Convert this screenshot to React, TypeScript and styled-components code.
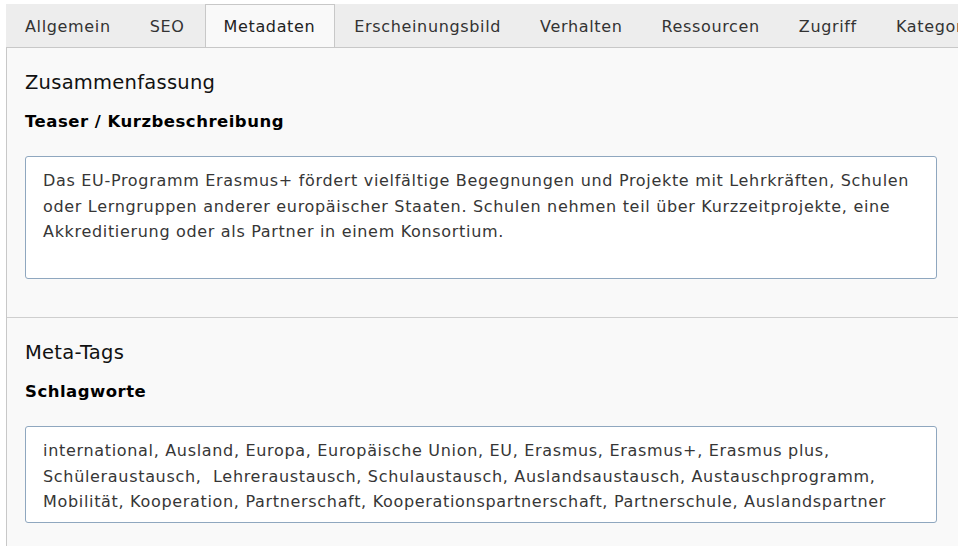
import { createGlobalStyle, styled } from 'styled-components';

const GlobalStyle = createGlobalStyle`
  body {
    margin: 0;
    background: #ffffff;
    font-family: 'DejaVu Sans', Verdana, sans-serif;
    color: #333333;
  }
`;

const tabs = [
  'Allgemein',
  'SEO',
  'Metadaten',
  'Erscheinungsbild',
  'Verhalten',
  'Ressourcen',
  'Zugriff',
  'Kategorien',
];

const teaser = `Das EU-Programm Erasmus+ fördert vielfältige Begegnungen und Projekte mit Lehrkräften, Schulen
oder Lerngruppen anderer europäischer Staaten. Schulen nehmen teil über Kurzzeitprojekte, eine
Akkreditierung oder als Partner in einem Konsortium.`;

const keywords = `international, Ausland, Europa, Europäische Union, EU, Erasmus, Erasmus+, Erasmus plus,
Schüleraustausch,  Lehreraustausch, Schulaustausch, Auslandsaustausch, Austauschprogramm,
Mobilität, Kooperation, Partnerschaft, Kooperationspartnerschaft, Partnerschule, Auslandspartner`;

export default function App() {
  return (
    <>
      <GlobalStyle />
      <Wrapper>
        <TabBar>
          {tabs.map((t) => (
            <Tab key={t} $active={t === 'Metadaten'}>
              {t}
            </Tab>
          ))}
        </TabBar>
        <Panel>
          <Section>
            <Heading>Zusammenfassung</Heading>
            <Label>Teaser / Kurzbeschreibung</Label>
            <Field $height={123}>{teaser}</Field>
          </Section>
          <Section>
            <Heading>Meta-Tags</Heading>
            <Label>Schlagworte</Label>
            <Field $height={97}>{keywords}</Field>
          </Section>
        </Panel>
      </Wrapper>
    </>
  );
}

const Wrapper = styled.div`
  padding: 4px 0 0 6px;
  height: 542px;
  overflow: hidden;
`;

const TabBar = styled.div`
  display: flex;
  align-items: flex-start;
  height: 43px;
  background: #ededed;
  border-bottom: 1px solid #c8c8c8;
  white-space: nowrap;
  overflow: hidden;
`;

const Tab = styled.div<{ $active?: boolean }>`
  display: flex;
  align-items: center;
  box-sizing: border-box;
  height: 44px;
  padding: 0 19px 0 18px;
  border: 1px solid transparent;
  border-bottom: none;
  font-size: 16px;
  letter-spacing: 0.65px;
  color: #333333;
  flex-shrink: 0;
  ${({ $active }) =>
    $active &&
    `
    background: #f9f9f9;
    border-color: #c8c8c8;
    color: #222222;
  `}
`;

const Panel = styled.div`
  background: #f9f9f9;
  border-left: 1px solid #c8c8c8;
  min-height: 500px;
`;

const Section = styled.div`
  padding: 22px 21px 38px 18px;
  & + & {
    border-top: 1px solid #cfcfcf;
  }
`;

const Heading = styled.div`
  font-size: 19.5px;
  letter-spacing: 0.25px;
  color: #111111;
  line-height: 26px;
`;

const Label = styled.div`
  margin-top: 14px;
  font-size: 16.5px;
  font-weight: bold;
  letter-spacing: 0.5px;
  color: #000000;
  line-height: 24px;
`;

const Field = styled.div<{ $height: number }>`
  margin-top: 22px;
  height: ${({ $height }) => $height}px;
  box-sizing: border-box;
  background: #ffffff;
  border: 1px solid #8fa7bf;
  border-radius: 3px;
  padding: 11px 17px;
  font-size: 16px;
  letter-spacing: 0.68px;
  line-height: 25.5px;
  color: #363636;
  white-space: pre;
  overflow: hidden;
`;
